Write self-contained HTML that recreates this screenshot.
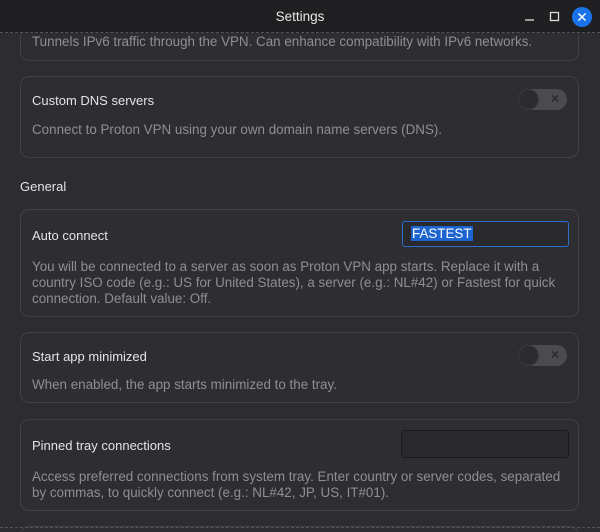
<!DOCTYPE html>
<html><head><style>
html,body{margin:0;width:600px;height:532px;overflow:hidden}
body{background:#2c2c31;font-family:"Liberation Sans",sans-serif;font-size:13px;color:#e6e6e6;position:relative}
.tb{position:absolute;left:0;top:0;width:600px;height:33px;background:#1f1f22;border-bottom:1px dashed #555;box-sizing:border-box;z-index:2}
.tb .t{position:absolute;left:0;right:0;top:9px;text-align:center;font-size:13.5px;color:#e8e8e8}
.card{position:absolute;left:20px;width:559px;border:1px solid #414147;border-radius:9px;box-sizing:border-box;background:#2d2d32}
.lbl{position:absolute;left:11px;font-size:13px;color:#e4e4e4}
.desc{position:absolute;left:11px;right:8px;color:#8e8e94;line-height:16px;font-size:13.4px}
.tog{position:absolute;right:11px;width:49px;height:21px;border-radius:11px;background:#4a4a4f}
.tog:before{content:"";position:absolute;left:0;top:0;width:19px;height:19px;border-radius:50%;background:#2c2c30;border:1px solid #3a3a3e}
.tog:after{content:"×";position:absolute;right:8px;top:1px;font-size:14px;color:#2a2a2e;font-weight:bold}
.inp{position:absolute;border:1px solid #1a1a1d;background:#2a2a2e;border-radius:3px;box-sizing:border-box}
</style></head><body>
<div class="card" style="top:10px;height:51px;border-top:none;border-radius:0 0 9px 9px">
<div class="desc" style="top:24px">Tunnels IPv6 traffic through the VPN. Can enhance compatibility with IPv6 networks.</div></div>
<div class="tb"><div class="t">Settings</div>
<svg style="position:absolute;left:520px;top:6px" width="80" height="22">
<line x1="5" y1="14" x2="14" y2="14" stroke="#ddd" stroke-width="1.3"/>
<rect x="30.5" y="6.5" width="8" height="8" fill="none" stroke="#ddd" stroke-width="1.3"/>
<circle cx="62" cy="11" r="10" fill="#1a73e8"/>
<path d="M58.5 7.5L65.5 14.5M65.5 7.5L58.5 14.5" stroke="#fff" stroke-width="1.5"/>
</svg></div>
<div class="card" style="top:76px;height:82px">
<div class="lbl" style="top:16px">Custom DNS servers</div>
<div class="tog" style="top:12px"></div>
<div class="desc" style="top:45px">Connect to Proton VPN using your own domain name servers (DNS).</div></div>
<div style="position:absolute;left:20px;top:179px;color:#e4e4e4">General</div>
<div class="card" style="top:209px;height:108px">
<div class="lbl" style="top:18px">Auto connect</div>
<div class="inp" style="left:381px;top:11px;width:167px;height:26px;border:1.5px solid #2a6fc9"><span style="position:absolute;left:8px;top:4px;background:#1c64d0;color:#fff;padding:0 1px;font-size:13.4px">FASTEST</span></div>
<div class="desc" style="top:49px">You will be connected to a server as soon as Proton VPN app starts. Replace it with a country ISO code (e.g.: US for United States), a server (e.g.: NL#42) or Fastest for quick connection. Default value: Off.</div></div>
<div class="card" style="top:332px;height:71px">
<div class="lbl" style="top:16px">Start app minimized</div>
<div class="tog" style="top:12px"></div>
<div class="desc" style="top:44px">When enabled, the app starts minimized to the tray.</div></div>
<div class="card" style="top:419px;height:92px">
<div class="lbl" style="top:18px">Pinned tray connections</div>
<div class="inp" style="left:380px;top:10px;width:168px;height:28px"></div>
<div class="desc" style="top:49px">Access preferred connections from system tray. Enter country or server codes, separated by commas, to quickly connect (e.g.: NL#42, JP, US, IT#01).</div></div>
<div class="card" style="top:526px;height:30px"></div>
<div style="position:absolute;left:0;top:527px;width:600px;border-top:1px dashed #555"></div>
</body></html>
